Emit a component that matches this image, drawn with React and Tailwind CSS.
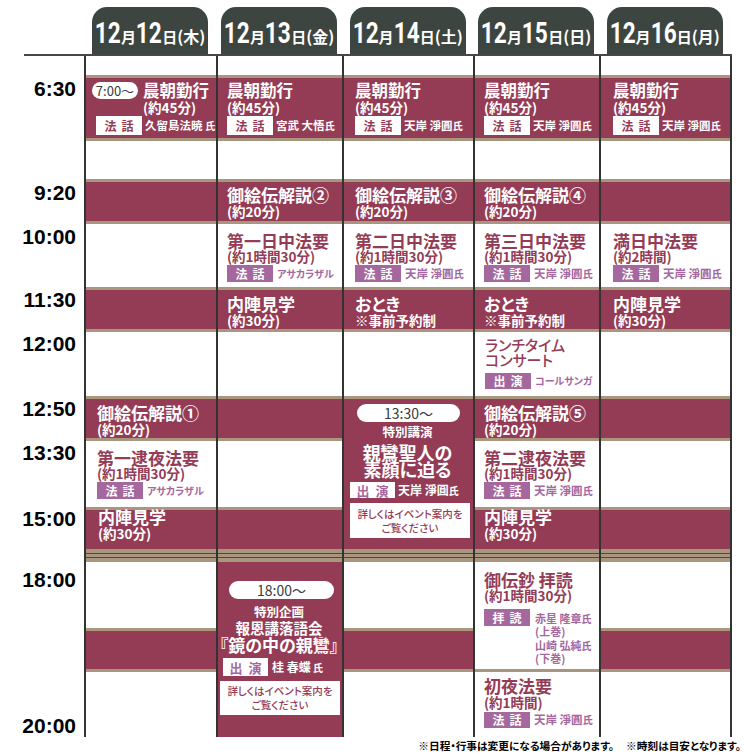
import React from 'react';

const days = [
  { m: '12', d: '12', w: '木' },
  { m: '12', d: '13', w: '金' },
  { m: '12', d: '14', w: '土' },
  { m: '12', d: '15', w: '日' },
  { m: '12', d: '16', w: '月' },
];

const MT = "text-[17px] leading-[19px] font-bold text-white whitespace-nowrap";
const MD = "text-[13.5px] leading-[15px] font-bold text-white whitespace-nowrap";
const WT = "text-[17px] leading-[17px] font-bold text-[#943c56] whitespace-nowrap";
const WD = "text-[13.5px] leading-[14px] font-bold text-[#943c56] whitespace-nowrap";
const TL = "col-start-1 text-right pr-[8px] text-[21px] leading-[24px] font-bold font-['Liberation_Sans',Arial,sans-serif] text-black";
const BAND = "col-start-2 col-end-8 bg-[#943c56] border-y-[3px] border-[#a8967f]";

function Num({ children }) {
  return (
    <span className="inline-block text-[29px] leading-none font-bold font-['Roboto',sans-serif] scale-x-[0.78] mx-[-3.5px]">
      {children}
    </span>
  );
}

function Tab({ d }) {
  return (
    <div className="flex justify-center pt-[7px]">
      <div className="w-[116px] h-[47px] rounded-t-[15px] bg-[#3d4540] flex items-center justify-center pt-[5px] text-white">
        <div className="flex items-baseline font-bold">
          <Num>{d.m}</Num>
          <span className="text-[15px] leading-none">月</span>
          <Num>{d.d}</Num>
          <span className="text-[15px] leading-none">日</span>
          <span className="text-[16px] leading-none">({d.w})</span>
        </div>
      </div>
    </div>
  );
}

function WhiteBox({ a, b }) {
  return (
    <div className="w-[46px] h-[19px] shrink-0 bg-white flex items-center justify-center gap-[5px] text-[12px] leading-none font-bold text-[#943c56]">
      <span>{a}</span>
      <span>{b}</span>
    </div>
  );
}

function PurpleBox({ a, b, h }) {
  return (
    <div className={"w-[46px] shrink-0 bg-[#a4679e] flex items-center justify-center gap-[5px] text-[12px] leading-none font-bold text-white " + h}>
      <span>{a}</span>
      <span>{b}</span>
    </div>
  );
}

function WPBox({ a, b, h }) {
  return (
    <div className={"w-[45px] shrink-0 bg-white flex items-center justify-center gap-[6px] text-[13px] leading-none font-bold text-[#a4679e] " + h}>
      <span>{a}</span>
      <span>{b}</span>
    </div>
  );
}

function NameW({ n }) {
  return (
    <span className="ml-[3px] text-[11.5px] leading-none font-bold text-white whitespace-nowrap">
      {n}
      <span className="text-[10px]">氏</span>
    </span>
  );
}

function NameP({ n }) {
  return (
    <span className="ml-[4px] text-[11.5px] leading-none font-bold text-[#a4679e] whitespace-nowrap">
      {n}
      <span className="text-[10px]">氏</span>
    </span>
  );
}

function Morning({ cls, name }) {
  return (
    <div className={"relative z-10 pt-[6px] " + cls}>
      <div className="text-[16.5px] leading-[18px] font-bold text-white whitespace-nowrap">晨朝勤行</div>
      <div className="text-[13.5px] leading-[16px] font-bold text-white whitespace-nowrap">(約45分)</div>
      <div className="mt-[1px] flex items-center">
        <WhiteBox a="法" b="話" />
        <NameW n={name} />
      </div>
    </div>
  );
}

function BandCell({ cls, t, d }) {
  return (
    <div className={"relative z-10 " + cls}>
      <div className={MT}>{t}</div>
      <div className={MD}>{d}</div>
    </div>
  );
}

function Houyou({ cls, t, d, name, kata }) {
  return (
    <div className={"relative z-10 pt-[8px] " + cls}>
      <div className={WT}>{t}</div>
      <div className={WD}>{d}</div>
      <div className="mt-[2px] flex items-center">
        <PurpleBox a="法" b="話" h="h-[17px]" />
        {kata ? (
          <span className="ml-[4px] text-[10px] leading-none font-bold text-[#a4679e] whitespace-nowrap">{kata}</span>
        ) : (
          <NameP n={name} />
        )}
      </div>
    </div>
  );
}

function InfoBox({ h }) {
  return (
    <div className={"w-[120px] bg-white flex flex-col items-center justify-center text-[10.5px] leading-[14px] font-medium text-[#943c56] whitespace-nowrap " + h}>
      <div>詳しくはイベント案内を</div>
      <div>ご覧ください</div>
    </div>
  );
}

export default function App() {
  return (
    <div className="w-[744px] h-[755px] bg-white overflow-hidden font-['Noto_Sans_CJK_JP',sans-serif] [font-feature-settings:'palt']">
      {/* header */}
      <div className="grid grid-cols-[84px_132px_126px_131px_126px_131px_2px] h-[54px]">
        <div />
        {days.map((d, i) => (
          <Tab key={i} d={d} />
        ))}
        <div />
      </div>
      <div className="ml-[24px] w-[708px] h-[2px] bg-[#474747]" />

      {/* body */}
      <div className="grid grid-cols-[84px_132px_126px_131px_126px_131px_2px] grid-rows-[19px_66px_38px_45px_63px_45px_64px_45px_66px_42px_13px_66px_44px_65px]">
        {/* bands */}
        <div className={"row-start-2 " + BAND} />
        <div className={"row-start-4 " + BAND} />
        <div className={"row-start-6 " + BAND} />
        <div className={"row-start-8 " + BAND} />
        <div className={"row-start-13 " + BAND} />
        <div className="row-start-10 col-start-2 col-end-8 bg-[#943c56] border-t-[3px] border-[#a8967f]" />
        <div className="row-start-11 col-start-2 col-end-8 flex flex-col">
          <div className="h-[4px] bg-[#a8967f]" />
          <div className="h-[1px] bg-[#4a4a4a]" />
          <div className="h-[3px] bg-[#a8967f]" />
          <div className="h-[1px] bg-[#4a4a4a]" />
          <div className="h-[4px] bg-[#a8967f]" />
        </div>

        {/* time labels */}
        <div className={"row-start-2 pt-[2px] " + TL}>6:30</div>
        <div className={"row-start-4 pt-[2px] " + TL}>9:20</div>
        <div className={"row-start-5 pt-[1px] " + TL}>10:00</div>
        <div className={"row-start-6 pt-[1px] " + TL}>11:30</div>
        <div className={"row-start-7 pt-[0px] " + TL}>12:00</div>
        <div className={"row-start-8 pt-[1px] " + TL}>12:50</div>
        <div className={"row-start-9 pt-[0px] " + TL}>13:30</div>
        <div className={"row-start-10 pt-[0px] " + TL}>15:00</div>
        <div className={"row-start-12 pt-[6px] " + TL}>18:00</div>
        <div className={"row-start-14 pt-[42px] " + TL}>20:00</div>

        {/* row 6:30 */}
        <div className="row-start-2 col-start-2 relative z-10 pt-[6px]">
          <div className="flex items-center h-[18px]">
            <div className="ml-[8px] w-[46px] h-[17px] shrink-0 rounded-full bg-white flex items-center justify-center text-[13px] leading-none text-[#3a3a3a]">
              7:00〜
            </div>
            <div className="ml-[5px] text-[16.5px] leading-[18px] font-bold text-white whitespace-nowrap">晨朝勤行</div>
          </div>
          <div className="pl-[59px] text-[13.5px] leading-[16px] font-bold text-white whitespace-nowrap">(約45分)</div>
          <div className="mt-[1px] pl-[12px] flex items-center">
            <WhiteBox a="法" b="話" />
            <NameW n="久留島法暁 " />
          </div>
        </div>
        <Morning cls="row-start-2 col-start-3 pl-[11px]" name="宮武 大悟" />
        <Morning cls="row-start-2 col-start-4 pl-[13px]" name="天岸 淨圓" />
        <Morning cls="row-start-2 col-start-5 pl-[11px]" name="天岸 淨圓" />
        <Morning cls="row-start-2 col-start-6 pl-[14px]" name="天岸 淨圓" />

        {/* row 9:20 */}
        <BandCell cls="row-start-4 col-start-3 pl-[11px] pt-[6px]" t="御絵伝解説②" d="(約20分)" />
        <BandCell cls="row-start-4 col-start-4 pl-[13px] pt-[6px]" t="御絵伝解説③" d="(約20分)" />
        <BandCell cls="row-start-4 col-start-5 pl-[11px] pt-[6px]" t="御絵伝解説④" d="(約20分)" />

        {/* row 10:00 */}
        <Houyou cls="row-start-5 col-start-3 pl-[11px]" t="第一日中法要" d="(約1時間30分)" kata="アサカラザル" />
        <Houyou cls="row-start-5 col-start-4 pl-[13px]" t="第二日中法要" d="(約1時間30分)" name="天岸 淨圓" />
        <Houyou cls="row-start-5 col-start-5 pl-[11px]" t="第三日中法要" d="(約1時間30分)" name="天岸 淨圓" />
        <Houyou cls="row-start-5 col-start-6 pl-[14px]" t="満日中法要" d="(約2時間)" name="天岸 淨圓" />

        {/* row 11:30 */}
        <BandCell cls="row-start-6 col-start-3 pl-[11px] pt-[7px]" t="内陣見学" d="(約30分)" />
        <BandCell cls="row-start-6 col-start-4 pl-[13px] pt-[7px]" t="おとき" d="※事前予約制" />
        <BandCell cls="row-start-6 col-start-5 pl-[11px] pt-[7px]" t="おとき" d="※事前予約制" />
        <BandCell cls="row-start-6 col-start-6 pl-[14px] pt-[7px]" t="内陣見学" d="(約30分)" />

        {/* row 12:00 */}
        <div className="row-start-7 col-start-5 relative z-10 pl-[12px] pt-[5px]">
          <div className="text-[15px] leading-[15px] font-medium text-[#943c56] whitespace-nowrap">ランチタイム</div>
          <div className="text-[15px] leading-[15px] font-medium text-[#943c56] whitespace-nowrap">コンサート</div>
          <div className="mt-[6px] flex items-center">
            <PurpleBox a="出" b="演" h="h-[16px]" />
            <span className="ml-[4px] text-[10px] leading-none font-bold text-[#a4679e] whitespace-nowrap">コールサンガ</span>
          </div>
        </div>

        {/* row 12:50 */}
        <BandCell cls="row-start-8 col-start-2 pl-[13px] pt-[7px]" t="御絵伝解説①" d="(約20分)" />
        <BandCell cls="row-start-8 col-start-5 pl-[11px] pt-[7px]" t="御絵伝解説⑤" d="(約20分)" />

        {/* special lecture 12/14 */}
        <div className="row-start-8 row-end-11 col-start-4 relative z-10 mt-[3px] bg-[#943c56] flex flex-col items-center pt-[5px]">
          <div className="ml-[2px] w-[103px] h-[18px] rounded-full bg-white flex items-center justify-center text-[14px] leading-none text-[#3a3a3a]">
            13:30〜
          </div>
          <div className="mt-[3px] text-[12.5px] leading-[14px] font-bold text-white">特別講演</div>
          <div className="mt-[5px] text-[18px] leading-[17px] font-bold text-white whitespace-nowrap">親鸞聖人の</div>
          <div className="text-[18px] leading-[17px] font-bold text-white whitespace-nowrap">素顔に迫る</div>
          <div className="self-start ml-[8px] mt-[4px] flex items-center">
            <WPBox a="出" b="演" h="h-[16px]" />
            <span className="ml-[3px] text-[12px] leading-none font-bold text-white whitespace-nowrap">
              天岸 淨圓<span className="text-[10px]">氏</span>
            </span>
          </div>
          <div className="mt-[5px] ml-[5px]">
            <InfoBox h="h-[35px]" />
          </div>
        </div>

        {/* row 13:30 */}
        <Houyou cls="row-start-9 col-start-2 pl-[13px]" t="第一逮夜法要" d="(約1時間30分)" kata="アサカラザル" />
        <Houyou cls="row-start-9 col-start-5 pl-[11px]" t="第二逮夜法要" d="(約1時間30分)" name="天岸 淨圓" />

        {/* row 15:00 */}
        <BandCell cls="row-start-10 col-start-2 pl-[14px] pt-[0px]" t="内陣見学" d="(約30分)" />
        <BandCell cls="row-start-10 col-start-5 pl-[11px] pt-[0px]" t="内陣見学" d="(約30分)" />

        {/* special event 12/13 evening */}
        <div className="row-start-12 row-end-15 col-start-3 relative z-10 bg-[#943c56] flex flex-col items-center pt-[19px]">
          <div className="ml-[5px] w-[105px] h-[18px] rounded-full bg-white flex items-center justify-center text-[14px] leading-none text-[#3a3a3a]">
            18:00〜
          </div>
          <div className="mt-[6px] text-[12.5px] leading-[14px] font-bold text-white">特別企画</div>
          <div className="text-[14.5px] leading-[17px] font-bold text-white whitespace-nowrap">報恩講落語会</div>
          <div className="text-[17px] leading-[17px] font-bold text-white whitespace-nowrap">『鏡の中の親鸞』</div>
          <div className="self-start ml-[7px] mt-[5px] flex items-center">
            <WPBox a="出" b="演" h="h-[18px]" />
            <span className="ml-[4px] text-[12px] leading-none font-bold text-white whitespace-nowrap">
              桂 春蝶<span className="text-[10px]"> 氏</span>
            </span>
          </div>
          <div className="mt-[5px] ml-[2px]">
            <InfoBox h="h-[34px]" />
          </div>
        </div>

        {/* 12/15 evening */}
        <div className="row-start-12 row-end-14 col-start-5 relative z-10 mb-[3px] bg-white pl-[11px] pt-[9px]">
          <div className={WT}>御伝鈔 拝読</div>
          <div className={WD}>(約1時間30分)</div>
          <div className="mt-[7px] flex items-start">
            <PurpleBox a="拝" b="読" h="h-[17px]" />
            <div className="ml-[5px] pt-[2.5px] text-[11px] leading-[12px] font-bold text-[#a4679e] whitespace-nowrap">
              <div>
                赤星 隆章<span className="text-[10px]">氏</span>
              </div>
              <div>(上巻)</div>
              <div className="mt-[2px]">
                山崎 弘純<span className="text-[10px]">氏</span>
              </div>
              <div>(下巻)</div>
            </div>
          </div>
        </div>
        <div className="row-start-14 col-start-5 relative z-10 pl-[11px] pt-[5px]">
          <div className="text-[17px] leading-[18px] font-bold text-[#943c56] whitespace-nowrap">初夜法要</div>
          <div className="text-[13.5px] leading-[15px] font-bold text-[#943c56] whitespace-nowrap">(約1時間)</div>
          <div className="mt-[2px] flex items-center">
            <PurpleBox a="法" b="話" h="h-[16px]" />
            <NameP n="天岸 淨圓" />
          </div>
        </div>

        {/* vertical lines */}
        <div className="row-start-1 row-end-15 col-start-2 relative z-20 pointer-events-none border-l-2 border-[#333]" />
        <div className="row-start-1 row-end-15 col-start-3 relative z-20 pointer-events-none border-l-2 border-[#333]" />
        <div className="row-start-1 row-end-15 col-start-4 relative z-20 pointer-events-none border-l-2 border-[#333]" />
        <div className="row-start-1 row-end-15 col-start-5 relative z-20 pointer-events-none border-l-2 border-[#333]" />
        <div className="row-start-1 row-end-15 col-start-6 relative z-20 pointer-events-none border-l-2 border-[#333]" />
        <div className="row-start-1 row-end-15 col-start-7 relative z-20 pointer-events-none bg-[#333]" />
      </div>

      {/* footer */}
      <div className="h-[18px] flex justify-end items-center gap-[12px] pr-[3px] text-[10.7px] leading-none font-bold text-black whitespace-nowrap">
        <span>※日程・行事は変更になる場合があります。</span>
        <span>※時刻は目安となります。</span>
      </div>
    </div>
  );
}
